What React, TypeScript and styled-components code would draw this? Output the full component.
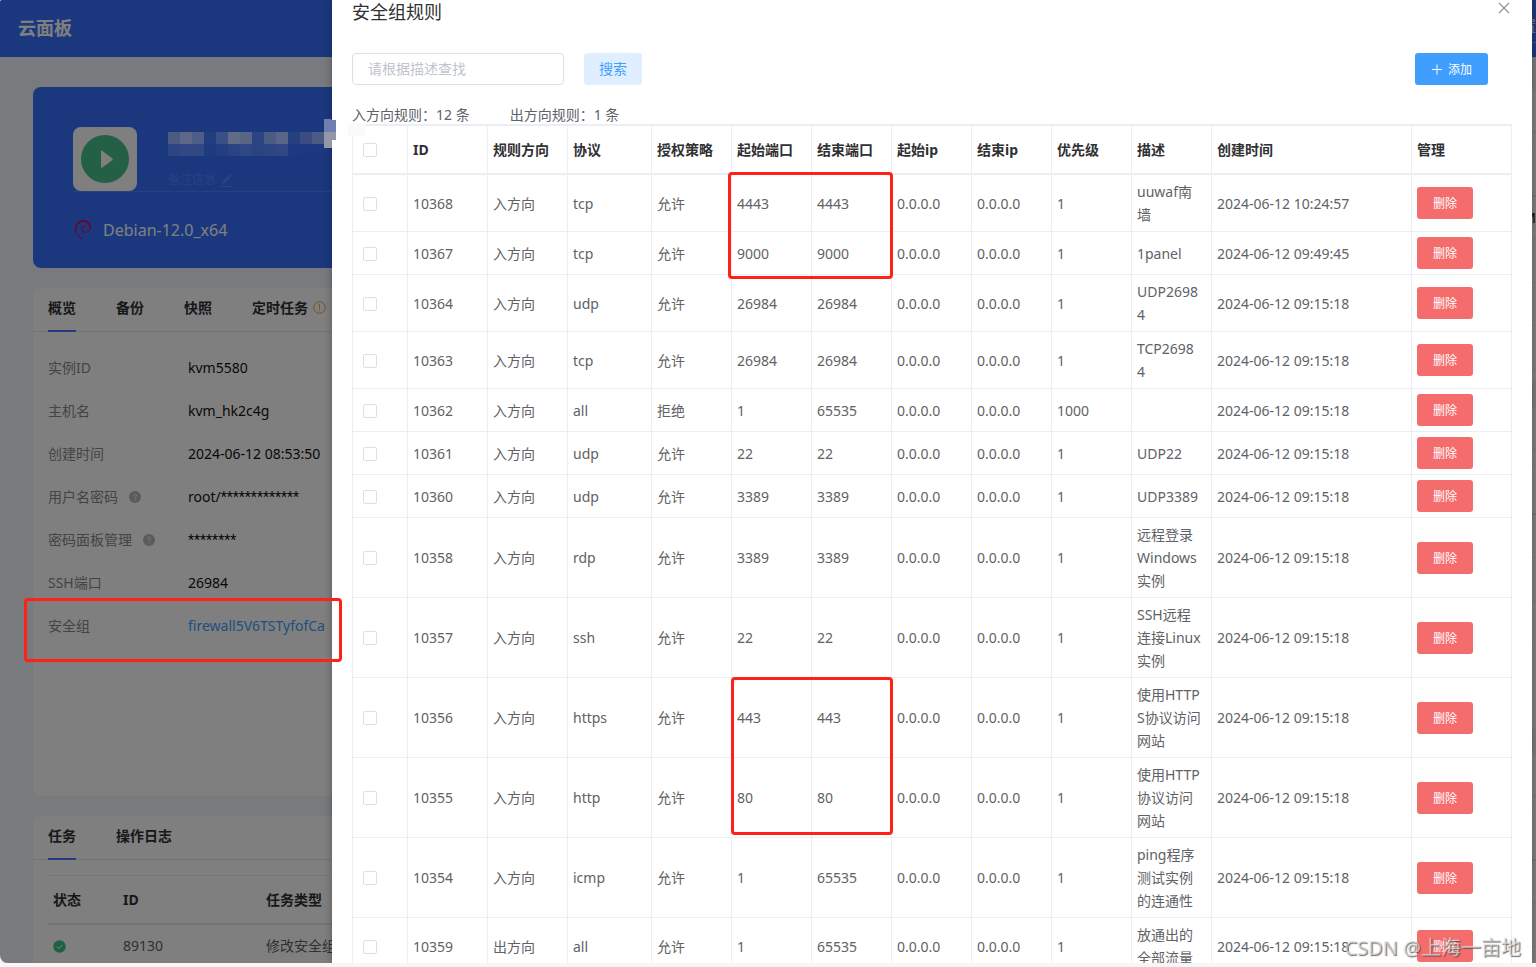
import React from 'react';
import styled, { createGlobalStyle, css } from 'styled-components';

const GlobalStyle = createGlobalStyle`
  * { box-sizing: border-box; }
  body {
    margin: 0;
    background: #f6f6f6;
    color: #606266;
    font: 14px/20px "Noto Sans", "Noto Sans CJK SC", sans-serif;
    overflow: hidden;
  }
  button, input { font-family: inherit; }
  h1, h2, p, dl, dd, dt { margin: 0; font-weight: inherit; font-size: inherit; }
`;

const Screen = styled.div`
  position: relative;
  height: calc(100vh - 4px);
  overflow: hidden;
  border-radius: 2px 0 0 8px;
  background: #f3f5fb;
  box-shadow: 0 1px 0 #d4d4d4;
`;

/* ---------- console page ---------- */

const TopBar = styled.header`
  height: 57px;
  display: flex;
  justify-content: space-between;
  background: #3671ff;
  color: #fff;
`;

const Brand = styled.h1`
  padding: 0 18px;
  font-size: 18px;
  line-height: 56px;
  font-weight: 700;
`;

const TopLink = styled.a`
  height: 43px;
  padding-top: 16px;
  border-bottom: 1px solid #7fa2ff;
  color: #fff;
  text-decoration: none;
`;

const Columns = styled.div`
  display: grid;
  grid-template-columns: minmax(0, 3fr) minmax(0, 1fr);
  gap: 20px;
  padding: 30px 0 0 33px;
`;

const Stack = styled.div`
  display: flex;
  flex-direction: column;
  gap: 20px;
`;

const Hero = styled.section`
  height: 181px;
  padding: 40px 40px 0;
  border-radius: 8px;
  background: #3671ff;
  color: #fff;
`;

const HeroTop = styled.div`
  display: flex;
  align-items: flex-end;
  gap: 31px;
  border-bottom: 1px solid rgba(255, 255, 255, 0.12);
`;

const StatusTile = styled.div`
  width: 64px;
  height: 64px;
  padding: 8px;
  border-radius: 8px;
  background: #fff;
`;

const Remark = styled.p`
  display: flex;
  align-items: center;
  gap: 4px;
  padding-bottom: 1px;
  font-size: 12px;
  color: rgba(255, 255, 255, 0.15);
`;

const System = styled.p`
  display: flex;
  align-items: center;
  gap: 8px;
  padding-top: 26px;
  font-size: 16px;
  line-height: 24px;
`;

const Card = styled.section<{ $min?: number }>`
  min-height: ${p => p.$min ?? 0}px;
  border-radius: 8px;
  background: #fff;
`;

const Tabs = styled.nav`
  display: flex;
  gap: 40px;
  height: 44px;
  padding: 0 15px;
  border-bottom: 1px solid #e4e7ed;
`;

const Tab = styled.button<{ $active?: boolean }>`
  display: flex;
  align-items: center;
  gap: 5px;
  height: 44px;
  padding: 0 0 4px;
  border: 0;
  border-bottom: 2px solid ${p => (p.$active ? '#5570ff' : 'transparent')};
  background: none;
  color: #303133;
  font-size: 14px;
  font-weight: 700;
  white-space: nowrap;
`;

const InfoList = styled.dl`
  padding: 14px 15px 0;
`;

const InfoRow = styled.div`
  display: grid;
  grid-template-columns: 140px 1fr;
  align-items: center;
  height: 43px;
`;

const InfoLabel = styled.dt`
  display: flex;
  align-items: center;
  gap: 11px;
  color: #86888c;
`;

const InfoValue = styled.dd`
  color: #111;
  a { color: #409eff; text-decoration: none; }
`;

const Stars = styled.span`
  font-family: Roboto, sans-serif;
`;

const TaskTable = styled.table`
  width: calc(100% - 30px);
  margin: 15px 15px 0;
  table-layout: fixed;
  border-spacing: 0;
  border-top: 1px solid #ebeef5;
  th { height: 49px; color: #303133; border-bottom: 2px solid #e6eaf3; }
  td { height: 43px; border-bottom: 1px solid #ebeef5; }
  th, td { padding: 0 5px; text-align: left; white-space: nowrap; }
`;

const SideTable = styled(TaskTable)`
  width: 100%;
  margin: 15px 0 0;
  th, td { padding: 0; text-align: right; }
  td { color: #111; }
`;

const CardHead = styled.div`
  height: 45px;
  border-bottom: 1px solid #e4e7ed;
`;

const Mask = styled.div`
  position: absolute;
  inset: 0;
  background: rgba(0, 0, 0, 0.5);
`;

/* ---------- rules drawer ---------- */

const Drawer = styled.aside`
  position: absolute;
  inset: 0 4px 0 332px;
  padding: 0 20px;
  overflow: hidden;
  background: #fff;
  box-shadow: 0 0 8px rgba(0, 0, 0, 0.3);
`;

const DrawerHead = styled.div`
  display: flex;
  justify-content: space-between;
  h2 { font-size: 18px; line-height: 24px; color: #303133; }
`;

const CloseButton = styled.button`
  width: 16px;
  height: 16px;
  padding: 2px;
  border: 0;
  background: none;
  color: #909399;
  svg { display: block; }
`;

const Toolbar = styled.form`
  display: flex;
  gap: 20px;
  padding: 29px 24px 0 0;
`;

const SearchInput = styled.input`
  width: 212px;
  height: 32px;
  padding: 0 15px 2px;
  border: 1px solid #dcdfe6;
  border-radius: 4px;
  font-size: 14px;
  &::placeholder { color: #c0c4cc; }
`;

const tones = {
  soft: css`width: 58px; padding-bottom: 2px; background: #e0efff; color: #409eff; font-size: 14px;`,
  primary: css`width: 73px; margin-left: auto; background: #409eff; color: #fff;`,
  danger: css`width: 56px; background: #f56c6c; color: #fff;`,
};

const Button = styled.button<{ $tone: keyof typeof tones }>`
  display: flex;
  align-items: center;
  justify-content: center;
  gap: 5px;
  height: 32px;
  padding: 0;
  border: 0;
  border-radius: 3px;
  font-size: 12px;
  ${p => tones[p.$tone]}
`;

const Summary = styled.p`
  display: flex;
  gap: 40px;
  height: 39px;
  padding-top: 20px;
`;

const RuleTable = styled.table`
  width: 100%;
  table-layout: fixed;
  border-spacing: 0;
  border-top: 2px solid #ebeef5;
  border-left: 1px solid #ebeef5;
  line-height: 23px;
  th, td {
    padding: 5px;
    text-align: left;
    white-space: pre;
    border-right: 1px solid #ebeef5;
    border-bottom: 1px solid #ebeef5;
  }
  th { height: 49px; color: #303133; border-bottom-width: 2px; }
  th:first-child, td:first-child { padding-left: 10px; }
`;

const Check = styled.input`
  appearance: none;
  display: block;
  width: 14px;
  height: 14px;
  margin: 1px 0 0;
  border: 1px solid #dcdfe6;
  border-radius: 2px;
  background: #fff;
`;

/* ---------- marks drawn over everything ---------- */

const RedFrame = styled.div<{ $x: number; $y: number; $w: number; $h: number }>`
  position: absolute;
  left: ${p => p.$x}px;
  top: ${p => p.$y}px;
  width: ${p => p.$w}px;
  height: ${p => p.$h}px;
  border: 3px solid #ff2116;
  border-radius: 4px;
  pointer-events: none;
`;

const Mosaic = styled.svg`
  position: absolute;
  left: 168px;
  top: 119px;
`;

const Watermark = styled.div`
  position: absolute;
  right: 15px;
  bottom: 1px;
  font-size: 20px;
  line-height: 28px;
  color: rgba(225, 225, 225, 0.7);
  text-shadow: 1px 1px 1px rgba(70, 70, 70, 0.8);
`;

/* ---------- icons ---------- */

const PlayIcon = () => (
  <svg width="48" height="48" viewBox="0 0 48 48" aria-hidden="true">
    <circle cx="24" cy="24" r="24" fill="#46c08a" />
    <path d="M20 16.6q0-1.6 1.4-.6l10 7.4q1 .8 0 1.6l-10 7.4q-1.4 1-1.4-.6z" fill="#fff" />
  </svg>
);

const DebianIcon = () => (
  <svg width="22" height="22" viewBox="0 0 22 22" fill="none" stroke="#d70a53" strokeLinecap="round" aria-hidden="true">
    <path d="M9 20C4.500 17.500 1.500 13 2.700 8.500C4 3 9 .800 13 2C17 3.200 18.500 8 16.500 11C14.500 14 10 14 9 11C8.200 8 10.500 6 13 7" strokeWidth="1.100" />
    <path d="M3 12C1.700 7 5 2.500 9.500 2C13 1.500 16.500 3.500 16.800 8" strokeWidth="1.500" />
  </svg>
);

const EditIcon = () => (
  <svg width="13" height="13" viewBox="0 0 13 13" fill="currentColor" aria-hidden="true">
    <path d="M1 12h11v1H1zM1.500 10.500l.700-2.700L8.500 1.500l2 2-6.300 6.300zM9.200.800l.600-.6q.6-.4 1.100 0l.900.900q.5.600 0 1.100l-.600.600z" />
  </svg>
);

const HelpIcon = () => (
  <svg width="12" height="12" viewBox="0 0 12 12" aria-hidden="true">
    <circle cx="6" cy="6" r="6" fill="#b4b6ba" />
    <path d="M4.500 4.800C4.500 2.700 7.500 2.700 7.500 4.700C7.500 5.800 6 5.800 6 7.200M6 8.300v1" stroke="#fff" fill="none" />
  </svg>
);

const WarnIcon = () => (
  <svg width="13" height="13" viewBox="0 0 13 13" fill="none" stroke="#e6a23c" aria-hidden="true">
    <circle cx="6.500" cy="6.500" r="5.800" />
    <path d="M6.500 3v4.500M6.500 8.700v1.200" />
  </svg>
);

const DoneIcon = () => (
  <svg width="13" height="13" viewBox="0 0 13 13" style={{ display: 'block' }} aria-label="完成">
    <circle cx="6.500" cy="6.500" r="6.200" fill="#3fc184" />
    <path d="M3.800 6.600l2 2 3.600-3.700" stroke="#fff" fill="none" />
  </svg>
);

const CloseIcon = () => (
  <svg width="12" height="12" viewBox="0 0 12 12" stroke="currentColor" fill="none" aria-hidden="true">
    <path d="M1 1l10 10M11 1L1 11" strokeWidth="1.200" />
  </svg>
);

const PlusIcon = () => (
  <svg width="12" height="12" viewBox="0 0 12 12" stroke="currentColor" fill="none" aria-hidden="true">
    <path d="M1 6.500h10M6 1.500v10" />
  </svg>
);

/* ---------- data ---------- */

const info: { label: string; value: React.ReactNode; help?: boolean }[] = [
  { label: '实例ID', value: 'kvm5580' },
  { label: '主机名', value: 'kvm_hk2c4g' },
  { label: '创建时间', value: '2024-06-12 08:53:50' },
  { label: '用户名密码', value: <>root/<Stars>*************</Stars></>, help: true },
  { label: '密码面板管理', value: <Stars>********</Stars>, help: true },
  { label: 'SSH端口', value: '26984' },
  { label: '安全组', value: <a href="#firewall">firewall5V6TSTyfofCa</a> },
];

const headers = ['ID', '规则方向', '协议', '授权策略', '起始端口', '结束端口', '起始ip', '结束ip', '优先级', '描述', '创建时间', '管理'];
const widths = [55, 80, 80, 84, 80, 80, 80, 80, 80, 80, 80, 200, 100];

const SEEDED = '2024-06-12 09:15:18';

// id, direction, protocol, policy, first port, last port, priority, description, created
const rules: string[][] = [
  ['10368', '入方向', 'tcp', '允许', '4443', '4443', '1', 'uuwaf南\n墙', '2024-06-12 10:24:57'],
  ['10367', '入方向', 'tcp', '允许', '9000', '9000', '1', '1panel', '2024-06-12 09:49:45'],
  ['10364', '入方向', 'udp', '允许', '26984', '26984', '1', 'UDP2698\n4', SEEDED],
  ['10363', '入方向', 'tcp', '允许', '26984', '26984', '1', 'TCP2698\n4', SEEDED],
  ['10362', '入方向', 'all', '拒绝', '1', '65535', '1000', '', SEEDED],
  ['10361', '入方向', 'udp', '允许', '22', '22', '1', 'UDP22', SEEDED],
  ['10360', '入方向', 'udp', '允许', '3389', '3389', '1', 'UDP3389', SEEDED],
  ['10358', '入方向', 'rdp', '允许', '3389', '3389', '1', '远程登录\nWindows\n实例', SEEDED],
  ['10357', '入方向', 'ssh', '允许', '22', '22', '1', 'SSH远程\n连接Linux\n实例', SEEDED],
  ['10356', '入方向', 'https', '允许', '443', '443', '1', '使用HTTP\nS协议访问\n网站', SEEDED],
  ['10355', '入方向', 'http', '允许', '80', '80', '1', '使用HTTP\n协议访问\n网站', SEEDED],
  ['10354', '入方向', 'icmp', '允许', '1', '65535', '1', 'ping程序\n测试实例\n的连通性', SEEDED],
  ['10359', '出方向', 'all', '允许', '1', '65535', '1', '放通出的\n全部流量', SEEDED],
];

const blocks = [
  ['#4c5b83', '#5e6886', '#4d5d88', '#203d80', '#3a4f86', '#626b86', '#5a6585', '#2b4583', '#4b5c84', '#5a6687', '#27417f', '#3c4b81', '#4b5c84'],
  ['#2d4583', '#314884', '#314884', '#1f3b80', '#243f80', '#2a4483', '#304783', '#2a4382', '#2d4581', '#304783', '#1d3a80', '#1c3980', '#1b3880'],
];

const SideCard = ({ min, rows }: { min: number; rows: string[] }) => (
  <Card $min={min}>
    <CardHead />
    <SideTable>
      <thead><tr><th scope="col" /></tr></thead>
      <tbody>{rows.map((text, i) => <tr key={i}><td>{text}</td></tr>)}</tbody>
    </SideTable>
  </Card>
);

const RuleRow = ({ rule }: { rule: string[] }) => {
  const [id, dir, proto, policy, from, to, priority, note, created] = rule;
  return (
    <tr>
      <td><Check type="checkbox" aria-label={id} /></td>
      {[id, dir, proto, policy, from, to, '0.0.0.0', '0.0.0.0', priority, note, created].map((cell, i) => (
        <td key={i}>{cell}</td>
      ))}
      <td><Button type="button" $tone="danger">删除</Button></td>
    </tr>
  );
};

export default function App() {
  return (
    <>
      <GlobalStyle />
      <Screen>
        <TopBar>
          <Brand>云面板</Brand>
          <TopLink href="#settings">设置</TopLink>
        </TopBar>
        <Columns>
          <Stack>
            <Hero>
              <HeroTop>
                <StatusTile><PlayIcon /></StatusTile>
                <Remark>备注信息 <EditIcon /></Remark>
              </HeroTop>
              <System><DebianIcon />Debian-12.0_x64</System>
            </Hero>
            <Card $min={508}>
              <Tabs>
                <Tab $active>概览</Tab>
                <Tab>备份</Tab>
                <Tab>快照</Tab>
                <Tab>定时任务<WarnIcon /></Tab>
              </Tabs>
              <InfoList>
                {info.map(item => (
                  <InfoRow key={item.label}>
                    <InfoLabel>{item.label}{item.help && <HelpIcon />}</InfoLabel>
                    <InfoValue>{item.value}</InfoValue>
                  </InfoRow>
                ))}
              </InfoList>
            </Card>
            <Card>
              <Tabs>
                <Tab $active>任务</Tab>
                <Tab>操作日志</Tab>
              </Tabs>
              <TaskTable>
                <colgroup><col width="70" /><col width="143" /><col /></colgroup>
                <thead><tr><th scope="col">状态</th><th scope="col">ID</th><th scope="col">任务类型</th></tr></thead>
                <tbody><tr><td><DoneIcon /></td><td>89130</td><td>修改安全组</td></tr></tbody>
              </TaskTable>
            </Card>
          </Stack>
          <Stack>
            <SideCard min={298} rows={['M', '', '', '']} />
            <SideCard min={326} rows={['', '', '']} />
            <SideCard min={298} rows={['', '']} />
          </Stack>
        </Columns>

        <Mask />

        <Drawer role="dialog" aria-labelledby="drawer-title">
          <DrawerHead>
            <h2 id="drawer-title">安全组规则</h2>
            <CloseButton type="button" aria-label="关闭"><CloseIcon /></CloseButton>
          </DrawerHead>
          <Toolbar onSubmit={e => e.preventDefault()}>
            <SearchInput type="text" placeholder="请根据描述查找" aria-label="请根据描述查找" />
            <Button type="submit" $tone="soft">搜索</Button>
            <Button type="button" $tone="primary"><PlusIcon />添加</Button>
          </Toolbar>
          <Summary>
            <span>入方向规则：12 条</span>
            <span>出方向规则：1 条</span>
          </Summary>
          <RuleTable>
            <colgroup>{widths.map((w, i) => <col key={i} width={w} />)}</colgroup>
            <thead>
              <tr>
                <th scope="col"><Check type="checkbox" aria-label="全选" /></th>
                {headers.map(h => <th scope="col" key={h}>{h}</th>)}
              </tr>
            </thead>
            <tbody>{rules.map(rule => <RuleRow key={rule[0]} rule={rule} />)}</tbody>
          </RuleTable>
        </Drawer>

        <Mosaic width="200" height="40" aria-hidden="true">
          {blocks.map((row, y) => row.map((fill, x) => (
            <rect key={`${y}-${x}`} x={x * 12} y={13 + y * 12} width="12" height="12" fill={fill} />
          )))}
          <path d="M156 0h7v1h5v12h-12z" fill="#6f7fb0" />
          <path d="M156 13h12v8h-4v8h-8z" fill="#9298aa" />
          <path d="M180 4h17v13h-17z" fill="#fafafa" />
        </Mosaic>
        <RedFrame $x={24} $y={598} $w={318} $h={64} />
        <RedFrame $x={728} $y={172} $w={165} $h={107} />
        <RedFrame $x={731} $y={677} $w={162} $h={158} />
        <Watermark>CSDN @上海一亩地</Watermark>
      </Screen>
    </>
  );
}
